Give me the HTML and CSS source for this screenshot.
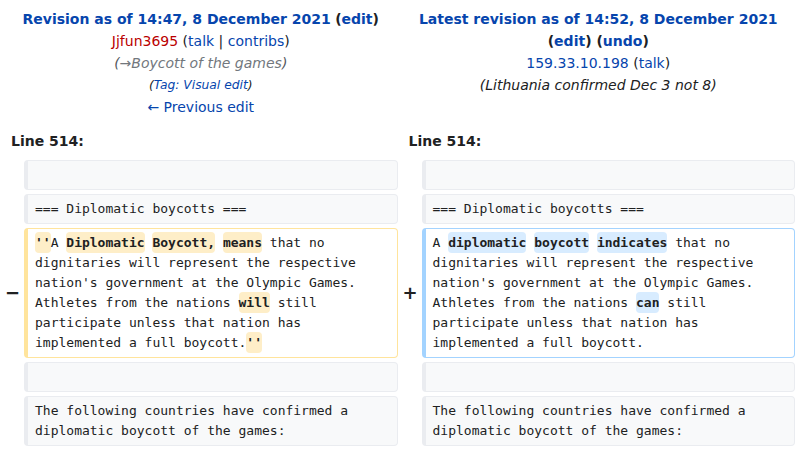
FILE: index.html
```html
<!DOCTYPE html>
<html lang="en">
<head>
<meta charset="utf-8">
<title>Diff</title>
<link rel="stylesheet" href="styles.css">
</head>
<body>
<table class="diff">
  <colgroup>
    <col class="col-marker">
    <col class="col-content">
    <col class="col-marker">
    <col class="col-content">
  </colgroup>
  <tr class="title-row">
    <td colspan="2" class="diff-otitle">
      <div class="title-line"><a class="rev strong" href="#">Revision as of 14:47, 8 December 2021</a> <span class="strong">(<a href="#">edit</a>)</span></div>
      <div><a class="new" href="#">Jjfun3695</a> (<a href="#">talk</a> | <a href="#">contribs</a>)</div>
      <div class="comment auto"><span class="paren">(</span><a class="autolink" href="#">→</a>Boycott of the games<span class="paren">)</span></div>
      <div class="tags">(<a href="#">Tag</a><span class="tagtext">: Visual edit</span>)</div>
      <div><a href="#">← Previous edit</a></div>
    </td>
    <td colspan="2" class="diff-ntitle">
      <div class="title-line"><a class="rev strong" href="#">Latest revision as of 14:52, 8 December 2021</a> <span class="strong">(<a href="#">edit</a>) (<a href="#">undo</a>)</span></div>
      <div><a href="#">159.33.10.198</a> (<a href="#">talk</a>)</div>
      <div class="comment">(Lithuania confirmed Dec 3 not 8)</div>
    </td>
  </tr>
  <tr>
    <td colspan="2" class="lineno">Line 514:</td>
    <td colspan="2" class="lineno">Line 514:</td>
  </tr>
  <tr>
    <td class="marker"></td>
    <td class="line context"><div><br></div></td>
    <td class="marker"></td>
    <td class="line context"><div><br></div></td>
  </tr>
  <tr>
    <td class="marker"></td>
    <td class="line context"><div>=== Diplomatic boycotts ===</div></td>
    <td class="marker"></td>
    <td class="line context"><div>=== Diplomatic boycotts ===</div></td>
  </tr>
  <tr>
    <td class="marker">−</td>
    <td class="line deleted"><div><del class="chg">''</del>A <del class="chg">Diplomatic</del> <del class="chg">Boycott,</del> <del class="chg">means</del> that no dignitaries will represent the respective nation's government at the Olympic Games. Athletes from the nations <del class="chg">will</del> still participate unless that nation has implemented a full boycott.<del class="chg">''</del></div></td>
    <td class="marker">+</td>
    <td class="line added"><div>A <ins class="chg">diplomatic</ins> <ins class="chg">boycott</ins> <ins class="chg">indicates</ins> that no dignitaries will represent the respective nation's government at the Olympic Games. Athletes from the nations <ins class="chg">can</ins> still participate unless that nation has implemented a full boycott.</div></td>
  </tr>
  <tr>
    <td class="marker"></td>
    <td class="line context"><div><br></div></td>
    <td class="marker"></td>
    <td class="line context"><div><br></div></td>
  </tr>
  <tr>
    <td class="marker"></td>
    <td class="line context"><div>The following countries have confirmed a diplomatic boycott of the games:</div></td>
    <td class="marker"></td>
    <td class="line context"><div>The following countries have confirmed a diplomatic boycott of the games:</div></td>
  </tr>
</table>
</body>
</html>
```
FILE: styles.css
```css
html, body {
  margin: 0;
  padding: 0;
  background: #ffffff;
}
body {
  font-family: "DejaVu Sans", sans-serif;
  font-size: 14px;
  color: #202122;
}
a {
  color: #0645ad;
  text-decoration: none;
}
.diff {
  width: 799px;
  table-layout: fixed;
  border-collapse: separate;
  border-spacing: 4px;
  margin: 0;
}
.col-marker {
  width: 16px;
}
.diff td {
  padding: 4px 0;
  vertical-align: top;
}
.diff-otitle, .diff-ntitle {
  text-align: center;
  line-height: 22px;
}
.strong {
  font-weight: bold;
}
.new {
  color: #ba0000;
}
.comment {
  font-style: italic;
}
.auto {
  color: #72777d;
}
.auto .paren {
  color: #54595d;
}
.auto .autolink {
  color: #72777d;
}
.tags {
  font-size: 12.3px;
  font-style: italic;
}
.tags .tagtext {
  color: #0645ad;
}
.diff td.lineno {
  font-weight: bold;
  line-height: 22px;
  padding-left: 7px;
}
.diff td.marker {
  vertical-align: middle;
  text-align: right;
  font-weight: bold;
  font-size: 18px;
  line-height: 20px;
  padding: 0 0 1px 0;
}
.diff td.line {
  padding: 0;
}
.line div {
  font-family: "DejaVu Sans Mono", monospace;
  font-size: 13px;
  line-height: 20px;
  white-space: pre-wrap;
  overflow-wrap: break-word;
  border-style: solid;
  border-width: 1px 1px 1px 4px;
  border-radius: 4px;
  padding: 4px 7px;
}
.context div {
  background: #f8f9fa;
  border-color: #eaecf0;
}
.deleted div {
  background: #ffffff;
  border-color: #ffe49c;
}
.added div {
  background: #ffffff;
  border-color: #a3d3ff;
}
.chg {
  font-weight: bold;
  text-decoration: none;
  border-radius: 4px;
  padding: 3px 0;
}
del.chg {
  background: #feeec8;
}
ins.chg {
  background: #d8ecff;
}
```
